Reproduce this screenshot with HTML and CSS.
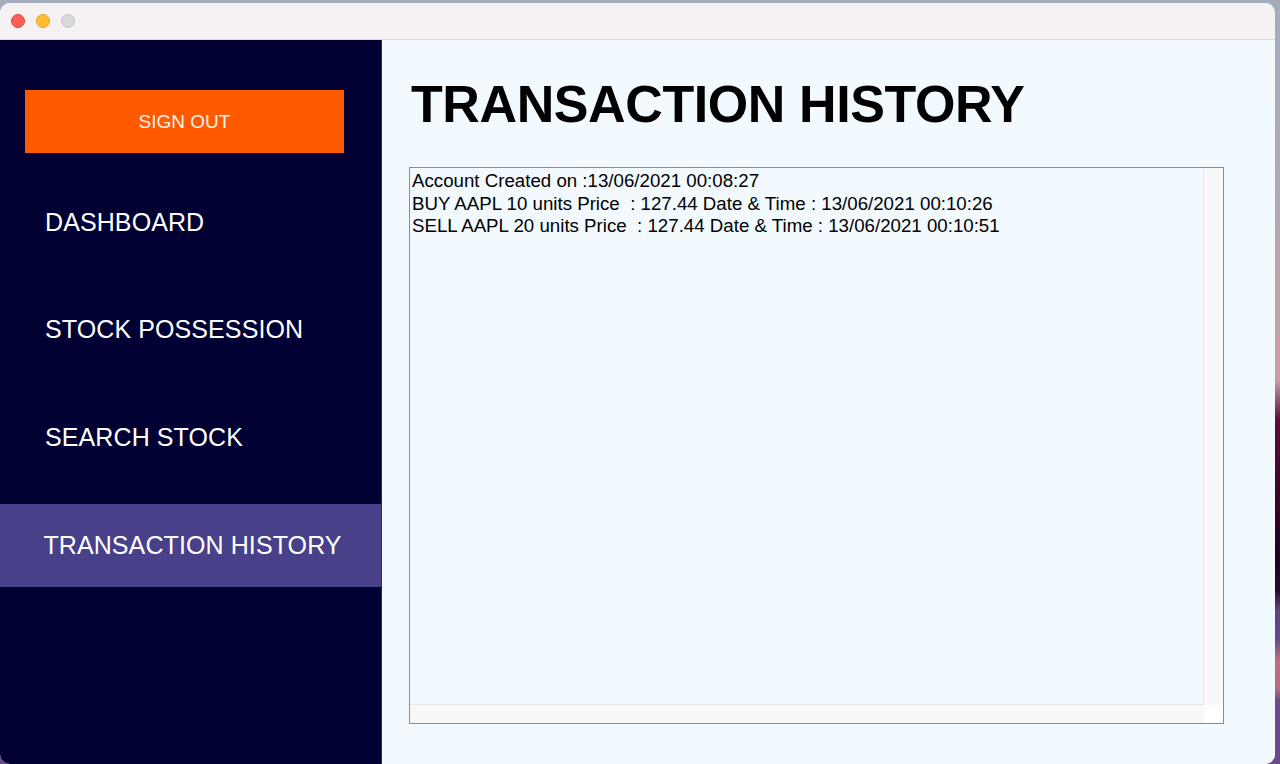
FILE: index.html
```html
<!DOCTYPE html>
<html lang="en">
<head>
<meta charset="utf-8">
<title>Transaction History</title>
<link rel="stylesheet" href="styles.css">
</head>
<body>
<div class="desktop">
  <div class="window">
    <div class="titlebar">
      <span class="light red"></span>
      <span class="light yellow"></span>
      <span class="light gray"></span>
    </div>
    <div class="app">
      <aside class="sidebar">
        <button class="signout">SIGN OUT</button>
        <nav class="nav">
          <a class="nav-item">DASHBOARD</a>
          <a class="nav-item">STOCK POSSESSION</a>
          <a class="nav-item">SEARCH STOCK</a>
          <a class="nav-item active">TRANSACTION HISTORY</a>
        </nav>
      </aside>
      <main class="content">
        <h1 class="title">TRANSACTION HISTORY</h1>
        <div class="textarea">
          <div class="text">Account Created on :13/06/2021 00:08:27
BUY AAPL 10 units Price  : 127.44 Date &amp; Time : 13/06/2021 00:10:26
SELL AAPL 20 units Price  : 127.44 Date &amp; Time : 13/06/2021 00:10:51</div>
          <div class="vscroll"></div>
          <div class="hscroll"></div>
          <div class="corner"></div>
        </div>
      </main>
    </div>
  </div>
</div>
</body>
</html>
```
FILE: styles.css
```css
* { box-sizing: border-box; }
html, body { margin: 0; padding: 0; }
body {
  width: 1280px;
  height: 764px;
  overflow: hidden;
  font-family: "Liberation Sans", Arial, sans-serif;
}
.desktop {
  width: 1280px;
  height: 764px;
  padding-top: 3px;
  background: linear-gradient(180deg,
    #a4acbc 0px, #aeaab8 200px, #c19fab 270px, #c99fa6 380px,
    #5a0d38 420px, #3a0628 500px, #1e0220 560px, #2a0a2a 590px,
    #5f4380 610px, #67498a 640px, #b9727e 660px, #b06c84 690px,
    #6c4a8c 700px, #6a4a8a 764px);
}
.window {
  width: 1275px;
  height: 761px;
  border-radius: 10px;
  overflow: hidden;
  display: flex;
  flex-direction: column;
  background: #f2faff;
}
.titlebar {
  height: 37px;
  flex: none;
  background: #f6f2f3;
  border-bottom: 1px solid #dcd7da;
  display: flex;
  align-items: center;
  padding-left: 11px;
  gap: 11px;
}
.light {
  width: 14px;
  height: 14px;
  border-radius: 50%;
  display: block;
}
.red { background: #fe5f57; border: 1px solid #e2463f; }
.yellow { background: #febc2e; border: 1px solid #e1a325; }
.gray { background: #dbd8d9; border: 1px solid #c8c5c6; }
.app {
  flex: 1;
  display: flex;
  min-height: 0;
}
.sidebar {
  width: 382px;
  flex: none;
  background: #000033;
  padding-top: 50px;
  border-right: 1px solid #2a2a55;
}
.signout {
  display: block;
  margin-left: 25px;
  width: 319px;
  height: 63px;
  background: #ff5a00;
  border: 0;
  color: #fdf1ea;
  font-family: "Liberation Sans", Arial, sans-serif;
  font-size: 19px;
  padding: 0;
}
.nav {
  margin-top: 28px;
  display: flex;
  flex-direction: column;
  gap: 24px;
}
.nav-item {
  height: 83px;
  display: flex;
  align-items: center;
  padding-left: 45px;
  color: #ffffff;
  font-size: 25px;
  letter-spacing: 0.1px;
}
.nav-item:nth-child(3) { margin-top: 1px; }
.nav-item.active {
  margin-top: 1px;
  background: #48418a;
  justify-content: center;
  padding-left: 4px;
}
.content {
  flex: 1;
  background: #f2faff;
  padding: 34px 0 0 27px;
}
.title {
  margin: 0 0 0 2px;
  font-size: 52px;
  line-height: 60px;
  font-weight: bold;
  letter-spacing: -0.4px;
  color: #000;
}
.textarea {
  margin-top: 33px;
  width: 815px;
  height: 557px;
  border: 1px solid #8c8c8c;
  display: grid;
  grid-template-columns: 1fr 19px;
  grid-template-rows: 1fr 18px;
}
.text {
  white-space: pre;
  font-size: 18.7px;
  line-height: 22.5px;
  color: #000;
  padding: 2px 0 0 2px;
  overflow: hidden;
  border-right: 1px solid #e4e4e4;
  border-bottom: 1px solid #e4e4e4;
}
.vscroll { background: #f8f8f8; }
.hscroll { background: #f8f8f8; }
.corner { background: #ffffff; }
```
